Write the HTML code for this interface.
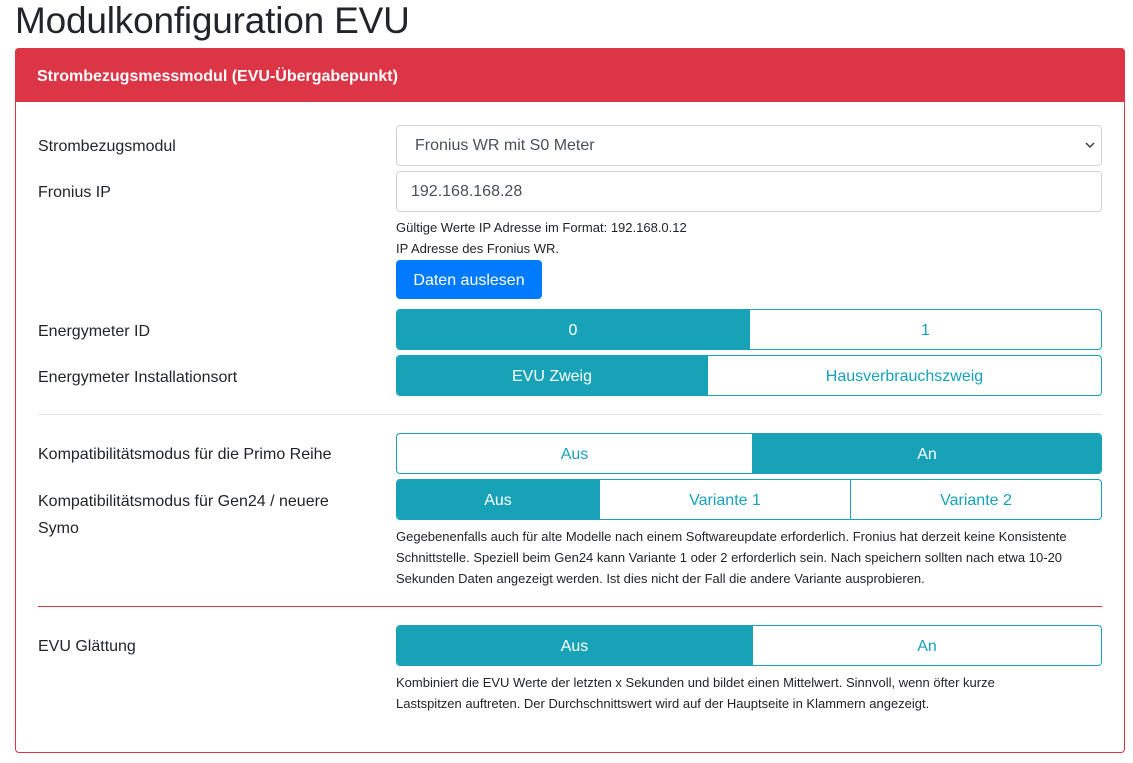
<!DOCTYPE html>
<html><head><meta charset="utf-8"><style>
*{box-sizing:border-box;margin:0;padding:0}
body{width:1133px;height:763px;background:#fff;font-family:"Liberation Sans",sans-serif;color:#212529;position:relative;overflow:hidden}
.a{position:absolute}
h1{position:absolute;left:15px;top:0px;font-size:37px;font-weight:400;color:#212529;letter-spacing:-0.2px}
.card{left:15px;top:48px;width:1110px;height:705px;border:1px solid #dc3545;border-radius:4px}
.hdr{left:15px;top:48px;width:1110px;height:54px;background:#dc3545;border-radius:4px 4px 0 0;color:#fff;font-weight:700;font-size:16px;padding:20px 0 0 22px}
.lbl{left:38px;font-size:16px;line-height:24px}
.ctl{left:396px;width:706px;height:41px;border:1px solid #ced4da;border-radius:4px;font-size:16px;color:#495057;line-height:39px;padding-left:14px}
.help{left:396px;font-size:13px;line-height:21px;color:#212529;width:700px}
.grp{left:396px;width:706px;height:41px;display:flex;border:1px solid #17a2b8;border-radius:4px;overflow:hidden}
.grp div{display:flex;align-items:center;justify-content:center;color:#17a2b8;font-size:16px;border-left:1px solid #17a2b8;padding-top:3px}
.grp div:first-child{border-left:none}
.grp .on{background:#17a2b8;color:#fff}
.hr{left:38px;width:1064px;height:1px;background:#e4e4e4}
</style></head><body>
<h1>Modulkonfiguration EVU</h1>
<div class="a card"></div>
<div class="a hdr">Strombezugsmessmodul (EVU-Übergabepunkt)</div>

<div class="a lbl" style="top:135px">Strombezugsmodul</div>
<div class="a ctl" style="top:125px;padding-left:18px">Fronius WR mit S0 Meter<svg class="a" style="right:6px;top:15px" width="10" height="8" viewBox="0 0 10 8"><path d="M1 2l4 4 4-4" fill="none" stroke="#343a40" stroke-width="1.4"/></svg></div>

<div class="a lbl" style="top:181px">Fronius IP</div>
<div class="a ctl" style="top:171px">192.168.168.28</div>
<div class="a help" style="top:217px">Gültige Werte IP Adresse im Format: 192.168.0.12<br>IP Adresse des Fronius WR.</div>
<div class="a" style="left:396px;top:260px;width:146px;height:39px;background:#007bff;border-radius:4px;color:#fff;font-size:16px;text-align:center;line-height:41px">Daten auslesen</div>

<div class="a lbl" style="top:320px">Energymeter ID</div>
<div class="a grp" style="top:309px"><div class="on" style="width:352px">0</div><div style="flex:1">1</div></div>

<div class="a lbl" style="top:366px">Energymeter Installationsort</div>
<div class="a grp" style="top:355px"><div class="on" style="width:310px">EVU Zweig</div><div style="flex:1">Hausverbrauchszweig</div></div>

<div class="a hr" style="top:414px"></div>

<div class="a lbl" style="top:443px">Kompatibilitätsmodus für die Primo Reihe</div>
<div class="a grp" style="top:433px"><div style="width:355px">Aus</div><div class="on" style="flex:1">An</div></div>

<div class="a lbl" style="top:488px;width:330px;line-height:27px">Kompatibilitätsmodus für Gen24 / neuere Symo</div>
<div class="a grp" style="top:479px"><div class="on" style="width:202px">Aus</div><div style="width:251px">Variante 1</div><div style="flex:1">Variante 2</div></div>
<div class="a help" style="top:526px">Gegebenenfalls auch für alte Modelle nach einem Softwareupdate erforderlich. Fronius hat derzeit keine Konsistente Schnittstelle. Speziell beim Gen24 kann Variante 1 oder 2 erforderlich sein. Nach speichern sollten nach etwa 10-20 Sekunden Daten angezeigt werden. Ist dies nicht der Fall die andere Variante ausprobieren.</div>

<div class="a hr" style="top:606px;background:#dc3545"></div>

<div class="a lbl" style="top:635px">EVU Glättung</div>
<div class="a grp" style="top:625px"><div class="on" style="width:355px">Aus</div><div style="flex:1">An</div></div>
<div class="a help" style="top:672px;width:645px">Kombiniert die EVU Werte der letzten x Sekunden und bildet einen Mittelwert. Sinnvoll, wenn öfter kurze Lastspitzen auftreten. Der Durchschnittswert wird auf der Hauptseite in Klammern angezeigt.</div>
</body></html>
